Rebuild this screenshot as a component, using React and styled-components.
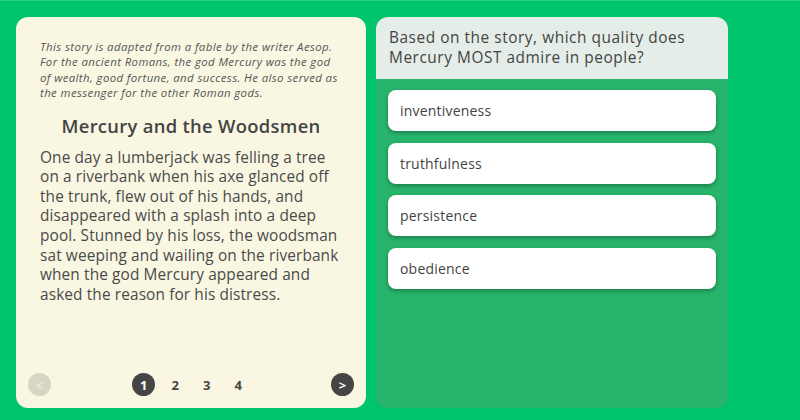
import React from 'react'
import styled, { createGlobalStyle } from 'styled-components'

const GlobalStyle = createGlobalStyle`
  body {
    margin: 0;
    background: #00c46c;
    font-family: 'Open Sans', 'Liberation Sans', sans-serif;
    color: #464646;
  }
`

const Page = styled.div`
  display: flex;
  gap: 10px;
  height: 420px;
  box-sizing: border-box;
  padding: 16px 16px 12px;
  border-top: 1px solid #2fcd82;
`

const StoryCard = styled.div`
  width: 350px;
  box-sizing: border-box;
  display: flex;
  flex-direction: column;
  background: #f9f7e2;
  border-radius: 12px;
  padding: 22px 12px 12px;
`

const Intro = styled.p`
  margin: 0;
  padding: 0 12px;
  font-size: 11.4px;
  letter-spacing: 0.4px;
  line-height: 15.4px;
  font-style: italic;
  color: #555;
`

const Title = styled.h2`
  margin: 12px 0 10px;
  text-align: center;
  font-size: 18.4px;
  letter-spacing: 0.3px;
  font-weight: 600;
  color: #444;
`

const Body = styled.p`
  margin: 0;
  padding: 0 12px;
  font-size: 15.4px;
  letter-spacing: 0.12px;
  line-height: 19.6px;
  color: #4a4a4a;
`

const Pager = styled.div`
  margin-top: auto;
  display: flex;
  align-items: center;
  justify-content: space-between;
`

const Pages = styled.div`
  display: flex;
  gap: 8.5px;
`

const Circle = styled.div`
  width: 23px;
  height: 23px;
  border-radius: 50%;
  display: flex;
  align-items: center;
  justify-content: center;
  font-size: 13px;
  font-weight: 700;
  background: ${p => (p.$disabled ? '#d7d5c4' : p.$active ? '#454545' : 'transparent')};
  color: ${p => (p.$disabled ? '#eceadb' : p.$active ? '#fff' : '#454545')};
`

const QuestionPanel = styled.div`
  width: 352px;
  display: flex;
  flex-direction: column;
  background: #28b46b;
  border-radius: 12px;
  overflow: hidden;
`

const Question = styled.div`
  background: #e4ede7;
  padding: 11px 13px 12px;
  font-size: 15.4px;
  letter-spacing: 0.55px;
  line-height: 19.5px;
  font-weight: 500;
  color: #444;
`

const Options = styled.div`
  display: flex;
  flex-direction: column;
  gap: 11.5px;
  padding: 11px 12px;
`

const Option = styled.div`
  height: 41px;
  display: flex;
  align-items: center;
  padding: 0 12px;
  background: #fff;
  border-radius: 8px;
  box-shadow: 0 2px 4px rgba(0, 0, 0, 0.3);
  font-size: 14px;
  letter-spacing: 0.2px;
  font-weight: 500;
  color: #444;
`

const answers = ['inventiveness', 'truthfulness', 'persistence', 'obedience']

export default function App() {
  return (
    <>
      <GlobalStyle />
      <Page>
        <StoryCard>
          <Intro>
            This story is adapted from a fable by the writer Aesop. For the ancient Romans, the god
            Mercury was the god of wealth, good fortune, and success. He also served as the
            messenger for the other Roman gods.
          </Intro>
          <Title>Mercury and the Woodsmen</Title>
          <Body>
            One day a lumberjack was felling a tree on a riverbank when his axe glanced off the
            trunk, flew out of his hands, and disappeared with a splash into a deep pool. Stunned by
            his loss, the woodsman sat weeping and wailing on the riverbank when the god Mercury
            appeared and asked the reason for his distress.
          </Body>
          <Pager>
            <Circle $disabled>&lt;</Circle>
            <Pages>
              {[1, 2, 3, 4].map(n => (
                <Circle key={n} $active={n === 1}>
                  {n}
                </Circle>
              ))}
            </Pages>
            <Circle $active>&gt;</Circle>
          </Pager>
        </StoryCard>
        <QuestionPanel>
          <Question>Based on the story, which quality does Mercury MOST admire in people?</Question>
          <Options>
            {answers.map(a => (
              <Option key={a}>{a}</Option>
            ))}
          </Options>
        </QuestionPanel>
      </Page>
    </>
  )
}
